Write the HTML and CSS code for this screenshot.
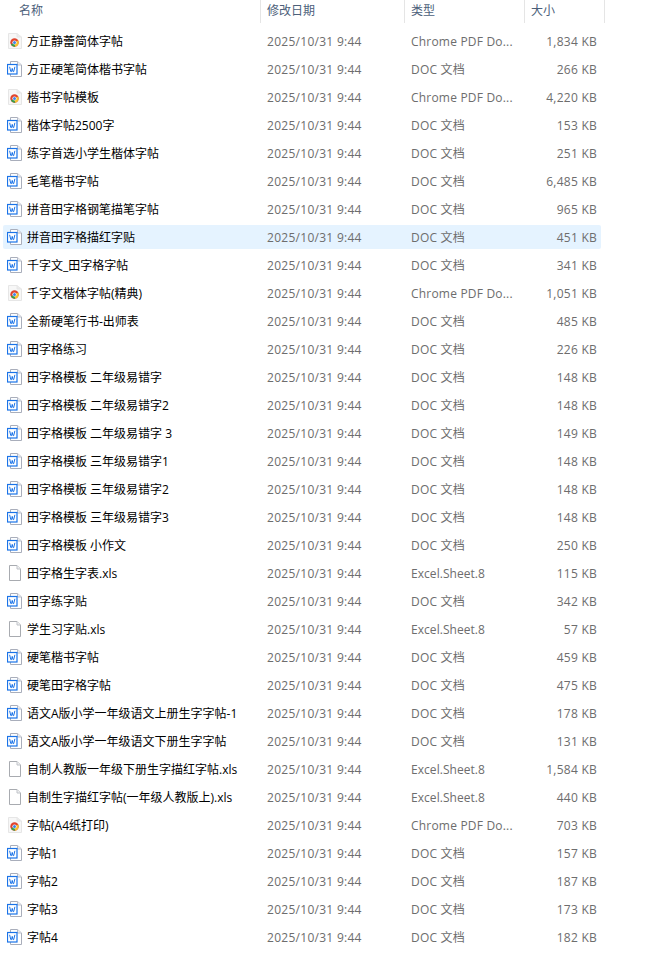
FILE: index.html
```html
<!DOCTYPE html>
<html>
	<head>
		<meta charset="utf-8">
		<title>文件列表</title>
		<link rel="stylesheet" href="styles.css">
	</head>
	<body>
		<svg class="defs" width="0" height="0">
			<symbol id="page" viewBox="0 0 16 16">
				<path d="M2.5 .5H10L13.5 4V15.5H2.5Z" fill="#fff" stroke="#a8abb0"/>
				<path d="M10 .5V4H13.5" fill="#f0f1f3" stroke="#c0c3c8"/>
			</symbol>
			<symbol id="pdf" viewBox="0 0 16 16">
				<path d="M1.5 .5H10L14.5 4V15.5H1.5Z" fill="#f7f7f7" stroke="#e6e6e6"/>
				<path d="M10 .5V4H14.5" fill="#ececec" stroke="#e6e6e6"/>
				<circle cx="7.5" cy="9.5" r="4.2" fill="#e0452f"/>
				<path d="M7.5 9.5L3.9 11.6A4.2 4.2 0 0 0 8.1 13.66Z" fill="#33a04e"/>
				<path d="M7.5 9.5L8.1 13.66A4.2 4.2 0 0 0 11.2 7.5Z" fill="#f6c02c"/>
				<circle cx="7.5" cy="9.5" r="2.1" fill="#fff"/>
				<circle cx="7.5" cy="9.5" r="1.5" fill="#3f83e8"/>
			</symbol>
			<symbol id="doc" viewBox="0 0 16 16">
				<path d="M3.5 .5H10.5L14.5 4V15.5H3.5Z" fill="#fff" stroke="#a9aebb"/>
				<path d="M10.5 .5V4H14.5" fill="#eceef2" stroke="#b9bdc8"/>
				<rect x=".5" y="3.5" width="9.5" height="9.5" fill="#fff" stroke="#1a73e8" stroke-width="1.2"/>
				<path d="M2.6 5.8L3.8 10.6H4.5L5.25 7.4L6 10.6H6.7L7.9 5.8" fill="none" stroke="#1a73e8"/>
			</symbol>
		</svg>

		<div class="header">
			<div class="head-cell head-name">名称</div>
			<div class="head-cell head-date">修改日期</div>
			<div class="head-cell head-type">类型</div>
			<div class="head-cell head-size">大小</div>
		</div>

		<div class="list">
			<div class="row"><svg class="icon"><use href="#pdf"/></svg><span class="name">方正静蕾简体字帖</span><span class="date">2025/10/31 9:44</span><span class="type">Chrome PDF Do...</span><span class="size">1,834 KB</span></div>
			<div class="row"><svg class="icon"><use href="#doc"/></svg><span class="name">方正硬笔简体楷书字帖</span><span class="date">2025/10/31 9:44</span><span class="type">DOC 文档</span><span class="size">266 KB</span></div>
			<div class="row"><svg class="icon"><use href="#pdf"/></svg><span class="name">楷书字帖模板</span><span class="date">2025/10/31 9:44</span><span class="type">Chrome PDF Do...</span><span class="size">4,220 KB</span></div>
			<div class="row"><svg class="icon"><use href="#doc"/></svg><span class="name">楷体字帖2500字</span><span class="date">2025/10/31 9:44</span><span class="type">DOC 文档</span><span class="size">153 KB</span></div>
			<div class="row"><svg class="icon"><use href="#doc"/></svg><span class="name">练字首选小学生楷体字帖</span><span class="date">2025/10/31 9:44</span><span class="type">DOC 文档</span><span class="size">251 KB</span></div>
			<div class="row"><svg class="icon"><use href="#doc"/></svg><span class="name">毛笔楷书字帖</span><span class="date">2025/10/31 9:44</span><span class="type">DOC 文档</span><span class="size">6,485 KB</span></div>
			<div class="row"><svg class="icon"><use href="#doc"/></svg><span class="name">拼音田字格钢笔描笔字帖</span><span class="date">2025/10/31 9:44</span><span class="type">DOC 文档</span><span class="size">965 KB</span></div>
			<div class="row selected"><svg class="icon"><use href="#doc"/></svg><span class="name">拼音田字格描红字贴</span><span class="date">2025/10/31 9:44</span><span class="type">DOC 文档</span><span class="size">451 KB</span></div>
			<div class="row"><svg class="icon"><use href="#doc"/></svg><span class="name">千字文_田字格字帖</span><span class="date">2025/10/31 9:44</span><span class="type">DOC 文档</span><span class="size">341 KB</span></div>
			<div class="row"><svg class="icon"><use href="#pdf"/></svg><span class="name">千字文楷体字帖(精典)</span><span class="date">2025/10/31 9:44</span><span class="type">Chrome PDF Do...</span><span class="size">1,051 KB</span></div>
			<div class="row"><svg class="icon"><use href="#doc"/></svg><span class="name">全新硬笔行书-出师表</span><span class="date">2025/10/31 9:44</span><span class="type">DOC 文档</span><span class="size">485 KB</span></div>
			<div class="row"><svg class="icon"><use href="#doc"/></svg><span class="name">田字格练习</span><span class="date">2025/10/31 9:44</span><span class="type">DOC 文档</span><span class="size">226 KB</span></div>
			<div class="row"><svg class="icon"><use href="#doc"/></svg><span class="name">田字格模板 二年级易错字</span><span class="date">2025/10/31 9:44</span><span class="type">DOC 文档</span><span class="size">148 KB</span></div>
			<div class="row"><svg class="icon"><use href="#doc"/></svg><span class="name">田字格模板 二年级易错字2</span><span class="date">2025/10/31 9:44</span><span class="type">DOC 文档</span><span class="size">148 KB</span></div>
			<div class="row"><svg class="icon"><use href="#doc"/></svg><span class="name">田字格模板 二年级易错字 3</span><span class="date">2025/10/31 9:44</span><span class="type">DOC 文档</span><span class="size">149 KB</span></div>
			<div class="row"><svg class="icon"><use href="#doc"/></svg><span class="name">田字格模板 三年级易错字1</span><span class="date">2025/10/31 9:44</span><span class="type">DOC 文档</span><span class="size">148 KB</span></div>
			<div class="row"><svg class="icon"><use href="#doc"/></svg><span class="name">田字格模板 三年级易错字2</span><span class="date">2025/10/31 9:44</span><span class="type">DOC 文档</span><span class="size">148 KB</span></div>
			<div class="row"><svg class="icon"><use href="#doc"/></svg><span class="name">田字格模板 三年级易错字3</span><span class="date">2025/10/31 9:44</span><span class="type">DOC 文档</span><span class="size">148 KB</span></div>
			<div class="row"><svg class="icon"><use href="#doc"/></svg><span class="name">田字格模板 小作文</span><span class="date">2025/10/31 9:44</span><span class="type">DOC 文档</span><span class="size">250 KB</span></div>
			<div class="row"><svg class="icon"><use href="#page"/></svg><span class="name">田字格生字表.xls</span><span class="date">2025/10/31 9:44</span><span class="type excel">Excel.Sheet.8</span><span class="size">115 KB</span></div>
			<div class="row"><svg class="icon"><use href="#doc"/></svg><span class="name">田字练字贴</span><span class="date">2025/10/31 9:44</span><span class="type">DOC 文档</span><span class="size">342 KB</span></div>
			<div class="row"><svg class="icon"><use href="#page"/></svg><span class="name">学生习字贴.xls</span><span class="date">2025/10/31 9:44</span><span class="type excel">Excel.Sheet.8</span><span class="size">57 KB</span></div>
			<div class="row"><svg class="icon"><use href="#doc"/></svg><span class="name">硬笔楷书字帖</span><span class="date">2025/10/31 9:44</span><span class="type">DOC 文档</span><span class="size">459 KB</span></div>
			<div class="row"><svg class="icon"><use href="#doc"/></svg><span class="name">硬笔田字格字帖</span><span class="date">2025/10/31 9:44</span><span class="type">DOC 文档</span><span class="size">475 KB</span></div>
			<div class="row"><svg class="icon"><use href="#doc"/></svg><span class="name">语文A版小学一年级语文上册生字字帖-1</span><span class="date">2025/10/31 9:44</span><span class="type">DOC 文档</span><span class="size">178 KB</span></div>
			<div class="row"><svg class="icon"><use href="#doc"/></svg><span class="name">语文A版小学一年级语文下册生字字帖</span><span class="date">2025/10/31 9:44</span><span class="type">DOC 文档</span><span class="size">131 KB</span></div>
			<div class="row"><svg class="icon"><use href="#page"/></svg><span class="name">自制人教版一年级下册生字描红字帖.xls</span><span class="date">2025/10/31 9:44</span><span class="type excel">Excel.Sheet.8</span><span class="size">1,584 KB</span></div>
			<div class="row"><svg class="icon"><use href="#page"/></svg><span class="name">自制生字描红字帖(一年级人教版上).xls</span><span class="date">2025/10/31 9:44</span><span class="type excel">Excel.Sheet.8</span><span class="size">440 KB</span></div>
			<div class="row"><svg class="icon"><use href="#pdf"/></svg><span class="name">字帖(A4纸打印)</span><span class="date">2025/10/31 9:44</span><span class="type">Chrome PDF Do...</span><span class="size">703 KB</span></div>
			<div class="row"><svg class="icon"><use href="#doc"/></svg><span class="name">字帖1</span><span class="date">2025/10/31 9:44</span><span class="type">DOC 文档</span><span class="size">157 KB</span></div>
			<div class="row"><svg class="icon"><use href="#doc"/></svg><span class="name">字帖2</span><span class="date">2025/10/31 9:44</span><span class="type">DOC 文档</span><span class="size">187 KB</span></div>
			<div class="row"><svg class="icon"><use href="#doc"/></svg><span class="name">字帖3</span><span class="date">2025/10/31 9:44</span><span class="type">DOC 文档</span><span class="size">173 KB</span></div>
			<div class="row"><svg class="icon"><use href="#doc"/></svg><span class="name">字帖4</span><span class="date">2025/10/31 9:44</span><span class="type">DOC 文档</span><span class="size">182 KB</span></div>
		</div>
	</body>
</html>
```

FILE: styles.css
```css
html{
	background: #fff;
}
body{
	margin: 0;
	height: 974px;
	overflow: hidden;
	font-family: "Open Sans", "Noto Sans CJK SC", sans-serif;
	font-size: 12px;
	color: #000;
}
.defs{
	display: block;
	height: 0;
}
.header{
	display: grid;
	grid-template-columns: 261px 144px 120px 80px;
	height: 23px;
}
.head-cell{
	border-right: 1px solid #e5e5e5;
	color: #4c607a;
	line-height: 21px;
	padding-left: 6px;
	box-sizing: border-box;
}
.head-name{
	padding-left: 19px;
}
.list{
	display: flex;
	flex-direction: column;
	gap: 4px;
	padding: 6px 0 0 3px;
	width: 598px;
}
.row{
	display: grid;
	grid-template-columns: 16px 244px 144px 113px 73px;
	align-items: center;
	height: 24px;
	padding-left: 4px;
	border-radius: 2px;
	box-sizing: border-box;
}
.selected{
	background: #e5f3ff;
}
.icon{
	width: 16px;
	height: 16px;
}
.name{
	padding-left: 4px;
	white-space: nowrap;
}
.date, .type, .size{
	color: #6d6d6d;
}
.date{
	letter-spacing: .28px;
}
.type{
	letter-spacing: .2px;
}
.excel{
	letter-spacing: .05px;
}
.size{
	letter-spacing: .25px;
	text-align: right;
}
```
